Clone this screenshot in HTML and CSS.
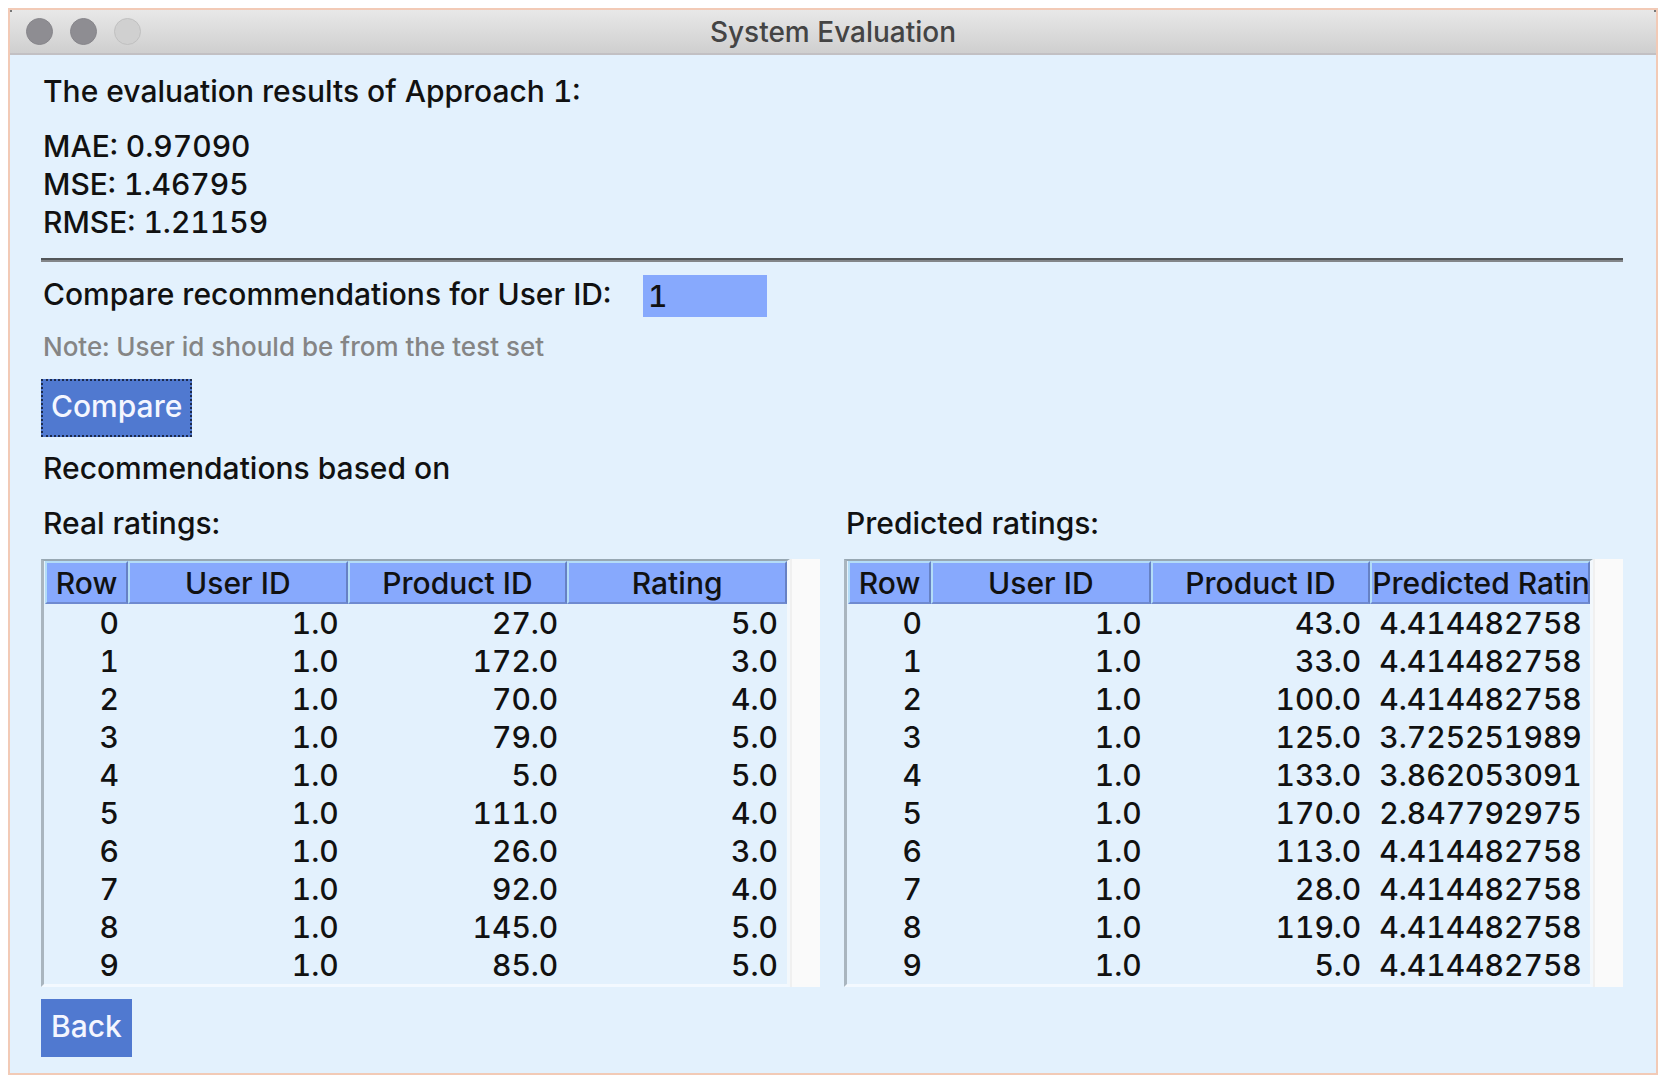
FILE: index.html
```html
<!DOCTYPE html>
<html lang="en">
<head>
<meta charset="utf-8">
<title>System Evaluation</title>
<link rel="stylesheet" href="styles.css">
</head>
<body>
<div class="window">
  <header class="titlebar">
    <div class="lights">
      <button class="light" type="button" aria-label="Close"></button>
      <button class="light" type="button" aria-label="Minimize"></button>
      <button class="light light-off" type="button" aria-label="Zoom" disabled></button>
    </div>
    <h1 class="title">System Evaluation</h1>
  </header>
  <main class="content">
    <p class="heading">The evaluation results of Approach 1:</p>
    <div class="metrics">
      <p>MAE: 0.97090</p>
      <p>MSE: 1.46795</p>
      <p>RMSE: 1.21159</p>
    </div>
    <hr class="rule">
    <form class="compare">
      <div class="field">
        <label for="user-id">Compare recommendations for User ID:</label>
        <input class="user-id" id="user-id" type="text" value="1">
      </div>
      <p class="note">Note: User id should be from the test set</p>
      <button class="btn btn-focused" type="button">Compare</button>
    </form>
    <p class="based-on">Recommendations based on</p>
    <div class="panels">
      <section class="panel">
        <h2 class="panel-title">Real ratings:</h2>
        <div class="grid-frame">
          <div class="grid-view">
            <table class="ratings">
              <thead><tr><th class="col-row"><span>Row</span></th><th><span>User ID</span></th><th><span>Product ID</span></th><th><span>Rating</span></th></tr></thead>
              <tbody>
                <tr><td>0</td><td>1.0</td><td>27.0</td><td>5.0</td></tr>
                <tr><td>1</td><td>1.0</td><td>172.0</td><td>3.0</td></tr>
                <tr><td>2</td><td>1.0</td><td>70.0</td><td>4.0</td></tr>
                <tr><td>3</td><td>1.0</td><td>79.0</td><td>5.0</td></tr>
                <tr><td>4</td><td>1.0</td><td>5.0</td><td>5.0</td></tr>
                <tr><td>5</td><td>1.0</td><td>111.0</td><td>4.0</td></tr>
                <tr><td>6</td><td>1.0</td><td>26.0</td><td>3.0</td></tr>
                <tr><td>7</td><td>1.0</td><td>92.0</td><td>4.0</td></tr>
                <tr><td>8</td><td>1.0</td><td>145.0</td><td>5.0</td></tr>
                <tr><td>9</td><td>1.0</td><td>85.0</td><td>5.0</td></tr>
              </tbody>
            </table>
          </div>
          <div class="scroll-track"></div>
        </div>
      </section>
      <section class="panel">
        <h2 class="panel-title">Predicted ratings:</h2>
        <div class="grid-frame">
          <div class="grid-view">
            <table class="ratings">
              <thead><tr><th class="col-row"><span>Row</span></th><th><span>User ID</span></th><th><span>Product ID</span></th><th><span>Predicted Ratin</span></th></tr></thead>
              <tbody>
                <tr><td>0</td><td>1.0</td><td>43.0</td><td>4.414482758</td></tr>
                <tr><td>1</td><td>1.0</td><td>33.0</td><td>4.414482758</td></tr>
                <tr><td>2</td><td>1.0</td><td>100.0</td><td>4.414482758</td></tr>
                <tr><td>3</td><td>1.0</td><td>125.0</td><td>3.725251989</td></tr>
                <tr><td>4</td><td>1.0</td><td>133.0</td><td>3.862053091</td></tr>
                <tr><td>5</td><td>1.0</td><td>170.0</td><td>2.847792975</td></tr>
                <tr><td>6</td><td>1.0</td><td>113.0</td><td>4.414482758</td></tr>
                <tr><td>7</td><td>1.0</td><td>28.0</td><td>4.414482758</td></tr>
                <tr><td>8</td><td>1.0</td><td>119.0</td><td>4.414482758</td></tr>
                <tr><td>9</td><td>1.0</td><td>5.0</td><td>4.414482758</td></tr>
              </tbody>
            </table>
          </div>
          <div class="scroll-track"></div>
        </div>
      </section>
    </div>
    <button class="btn btn-back" type="button">Back</button>
  </main>
</div>
</body>
</html>
```

FILE: styles.css
```css
* {
  box-sizing: border-box;
}

body {
  margin: 0;
  padding: 8px 8px 6px;
  background: #fff;
  color: #111;
  font-family: Inter, "Liberation Sans", sans-serif;
  font-size: 30px;
  font-weight: 450;
  line-height: 38px;
  font-variant-numeric: tabular-nums;
}

p,
h1,
h2 {
  margin: 0;
  font-size: inherit;
  font-weight: inherit;
}

.window {
  border: 2px solid #f2cab6;
  background: #e3f1fd;
}

/* Title bar */
.titlebar {
  display: grid;
  grid-template-columns: 1fr auto 1fr;
  align-items: center;
  height: 45px;
  padding: 0 16px;
  border-bottom: 2px solid #c2c0c3;
  background:
    linear-gradient(#777, #777) left top / 2px 2px no-repeat,
    linear-gradient(#777, #777) right top / 2px 2px no-repeat,
    linear-gradient(#e8e8e8, #cfcfcf);
}

.lights {
  display: flex;
  gap: 17px;
}

.light {
  width: 27px;
  height: 27px;
  padding: 0;
  border: 1px solid #87868b;
  border-radius: 50%;
  background: #8e8d92;
}

.light-off {
  border-color: #c0c0c0;
  background: #d0d0d0;
}

.title {
  color: #444;
  font-size: 28px;
}

/* Window body */
.content {
  padding: 17px 33px 16px 31px;
}

.heading,
.metrics,
.field,
.note,
.based-on,
.panel-title {
  padding-left: 2px;
}

.metrics {
  margin-top: 17px;
}

.rule {
  height: 4px;
  margin: 17px 0 13px;
  border: 0;
  border-top: 2px solid #525659;
  border-bottom: 2px solid #838689;
}

.field {
  display: flex;
  align-items: flex-start;
  gap: 32px;
}

.user-id {
  width: 124px;
  height: 42px;
  padding: 0 5px;
  border: 0;
  background: #87a9fd;
  color: #111;
  font: inherit;
}

.note {
  margin: 13px 0 15px;
  color: #858585;
  font-size: 26px;
  line-height: 34px;
}

.btn {
  display: block;
  height: 58px;
  padding: 8px 10px 12px;
  border: 0;
  background: #5079d0;
  color: #f4f6ff;
  font: inherit;
}

.btn-focused {
  outline: 2px dotted #1c2a4c;
  outline-offset: -2px;
}

.based-on {
  margin-top: 12px;
}

/* Rating tables */
.panels {
  display: grid;
  grid-template-columns: 1fr 1fr;
  gap: 24px;
  margin-top: 17px;
}

.panel-title {
  margin-bottom: 17px;
}

.grid-frame {
  display: flex;
}

.grid-view {
  flex: 1;
  min-width: 0;
  padding-left: 1px;
  border-top: 2px solid #98a8b3;
  border-left: 3px solid #a9b5bf;
  border-right: 3px solid #f3f8fc;
  border-bottom: 3px solid #f3f9ff;
}

.scroll-track {
  width: 30px;
  border-left: 2px solid #f0f0f0;
  background: #fafafa;
}

.ratings {
  width: 100%;
  table-layout: fixed;
  border-collapse: separate;
  border-spacing: 0;
}

.ratings th {
  height: 43px;
  padding: 0;
  border-style: solid;
  border-width: 2px;
  border-color: #b3dcf7 #6681c4 #6f8ad0 #b3dcf7;
  background: #87a9fd;
  font-weight: inherit;
}

.ratings th span {
  display: block;
  overflow: hidden;
  white-space: nowrap;
}

.ratings .col-row {
  width: 83px;
}

.ratings td {
  height: 38px;
  padding: 0 9px;
  text-align: right;
}

.btn-back {
  margin-top: 12px;
}
```
